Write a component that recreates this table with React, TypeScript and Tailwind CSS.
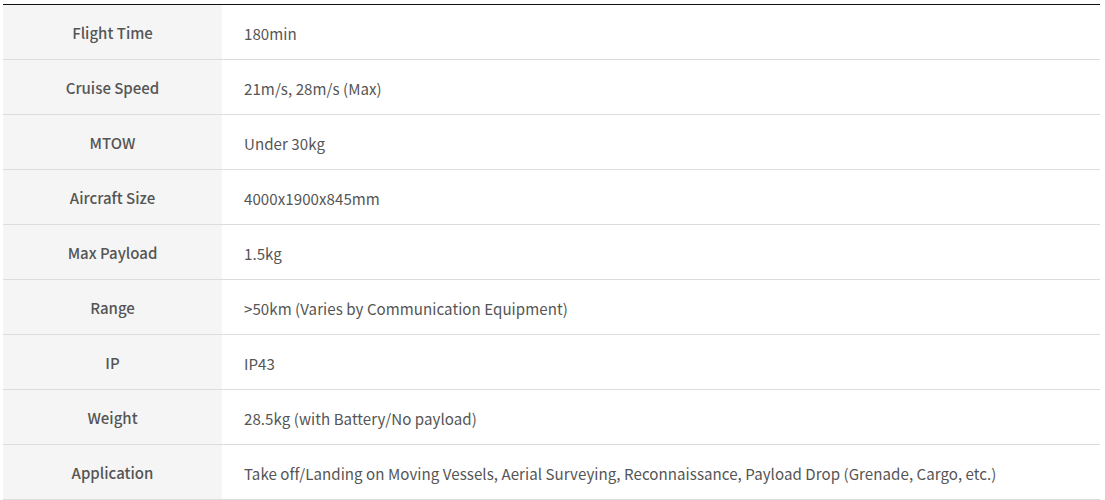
const specs: [string, string][] = [
  ["Flight Time", "180min"],
  ["Cruise Speed", "21m/s, 28m/s (Max)"],
  ["MTOW", "Under 30kg"],
  ["Aircraft Size", "4000x1900x845mm"],
  ["Max Payload", "1.5kg"],
  ["Range", ">50km (Varies by Communication Equipment)"],
  ["IP", "IP43"],
  ["Weight", "28.5kg (with Battery/No payload)"],
  ["Application", "Take off/Landing on Moving Vessels, Aerial Surveying, Reconnaissance, Payload Drop (Grenade, Cargo, etc.)"],
]

export default function App() {
  return (
    <div
      className="bg-white w-[1105px] h-[500px] pl-[3px] pt-[4px] overflow-hidden"
      style={{ fontFamily: '"Noto Sans CJK KR", "Noto Sans", sans-serif' }}
    >
      <table className="w-[1097px] border-collapse border-t border-t-[#111]">
        <tbody>
          {specs.map(([label, value]) => (
            <tr key={label} className="border-b border-b-[#dcdcdc] h-[55px]">
              <th className="w-[219px] pt-[2px] bg-[#f5f5f5] text-center text-[15px] font-medium text-[#555]">
                {label}
              </th>
              <td className="pl-[22px] pt-[2px] text-left text-[15.1px] tracking-[0.05px] text-[#555]">{value}</td>
            </tr>
          ))}
        </tbody>
      </table>
    </div>
  )
}
